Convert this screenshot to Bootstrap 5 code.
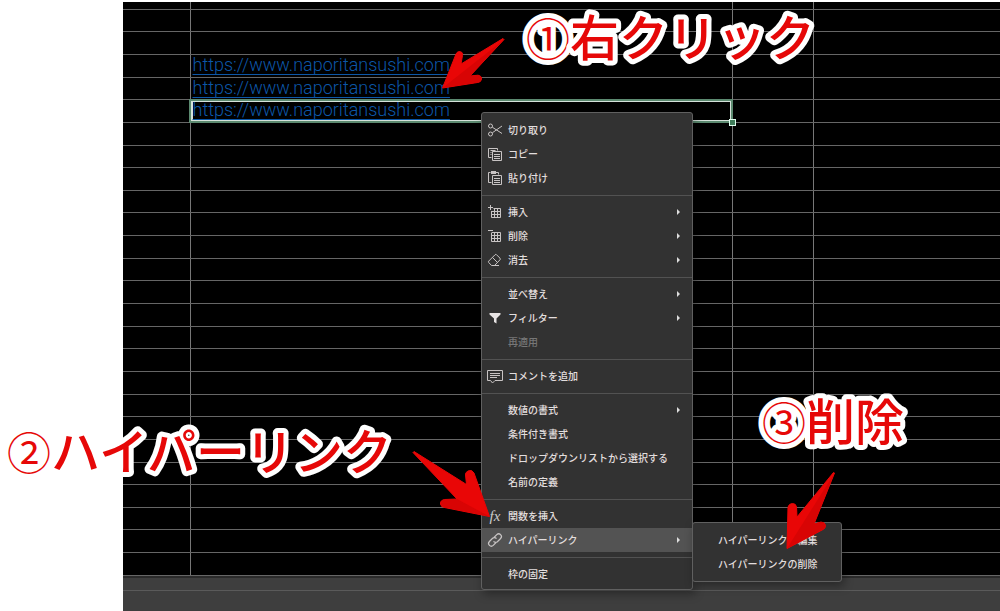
<!DOCTYPE html>
<html lang="ja">
<head>
<meta charset="utf-8">
<meta name="viewport" content="width=device-width, initial-scale=1">
<title>ハイパーリンクの削除</title>
<link href="https://cdn.jsdelivr.net/npm/bootstrap@5.3.0/dist/css/bootstrap.min.css" rel="stylesheet">
<style>
  body { font-family: "Noto Sans CJK JP", sans-serif; background: #fff; }
  .workbook { margin-left: 123px; margin-top: 2px; background: #3e3e3e; min-height: calc(100vh - 2px); }
  .sheet { height: calc(100vh - 37px); table-layout: fixed; border-collapse: collapse; background: #000; }
  .sheet td { font-family: Roboto, "Noto Sans CJK JP", sans-serif; padding: 0 0 0 2px; border: 1px solid #666; border-left-color: #777; border-right-color: #777; line-height: 20px; font-size: 18px; height: 22px; vertical-align: top; }
  .sheet td:first-child { border-left: 0; }
  .sheet td:last-child { border-right: 0; }
  .sheet tr:first-child td { border-top: 0; height: 7px; }
  .sheet a { color: #0c57a8; font-weight: 300; text-decoration: underline; text-decoration-thickness: 1px; text-underline-offset: 3px; text-decoration-skip-ink: none; }
  .sheet td.active-cell { outline: 2px solid #5c8a70; outline-offset: -1px; box-shadow: inset 0 0 0 2px #d5e2da; position: relative; }
  .fill-handle { right: -4px; bottom: -4px; width: 7px; height: 7px; background: #3f7d5a; border: 1px solid #dfe; z-index: 1; }
  .status-line { height: 15px; border-top: 2px solid #2a2a2a; border-bottom: 1px solid #5a5a5a; }

  .context-menu { background: #323232; border: 1px solid #606060; border-radius: 3px; padding: 5px 0 3px; box-shadow: 2px 4px 10px rgba(0,0,0,.35); color: #e2dede; font-size: 10px; }
  .main-menu { left: 481px; top: 112px; width: 212px; }
  .sub-menu { left: 210px; top: -6px; width: 150px; padding: 5px 0; }
  .menu-row { height: 24px; width: 100%; border: 0; background: transparent; color: inherit; padding: 0 12px 0 4px; font-weight: 500; line-height: 24px; text-align: left; }
  .menu-row:disabled { color: #777; }
  .menu-row.current { background: #535353; }
  .sub-menu .menu-row { padding-left: 25px; }
  .menu-icon { width: 18px; height: 18px; margin-right: 4px; flex: none; fill: none; stroke: #c8c4c4; stroke-width: 1; }
  .fx-icon { width: 18px; margin-right: 4px; font: italic 15px "Liberation Serif", serif; text-align: center; color: #ccc; }
  .menu-caret { width: 0; height: 0; border: 3px solid transparent; border-left-color: #ddd; border-right: 0; }
  .menu-rule { height: 1px; margin: 5px 0 4px; background: #525252; }

  .note, .arrow { overflow: visible; pointer-events: none; z-index: 1100; }
  .note text { font-size: 49px; font-weight: 500; fill: #e60808; stroke: #fff; stroke-width: 10px; stroke-linejoin: round; paint-order: stroke; }
  .note .step { font-size: 44px; font-weight: 400; }
  .note-one { left: 526px; top: 10px; width: 300px; height: 60px; }
  .note-two { left: 7px; top: 424px; width: 400px; height: 60px; }
  .note-three { left: 762px; top: 394px; width: 150px; height: 60px; }
  .arrow { fill: #e90606; stroke: #e90606; stroke-linejoin: round; }
  .arrow .shade { fill: #d80404; stroke: none; }
  .arrow-one { left: 440px; top: 34px; width: 68px; height: 58px; }
  .arrow-two { left: 410px; top: 448px; width: 84px; height: 74px; }
  .arrow-three { left: 784px; top: 468px; width: 54px; height: 84px; }
</style>
</head>
<body class="position-relative">
<main class="workbook">
  <table class="sheet w-100">
    <colgroup><col style="width:67px"><col style="width:542px"><col style="width:81px"><col></colgroup>
    <tbody id="rows"></tbody>
  </table>
  <div class="status-line"></div>
</main>

<nav class="context-menu main-menu position-absolute" aria-label="コンテキストメニュー">
  <button class="menu-row d-flex align-items-center"><svg class="menu-icon" viewBox="0 0 18 18"><circle cx="4.500" cy="5" r="2"/><circle cx="4.500" cy="13" r="2"/><path d="M6.300 6.200 16 12.500M6.300 11.800 16 5"/></svg>切り取り</button>
  <button class="menu-row d-flex align-items-center"><svg class="menu-icon" viewBox="0 0 18 18"><path d="M5.500 12.500h-3v-9h9v2M4.500 5.500h5M4.500 7.500h1M4.500 9.500h1M6.500 6.500h9v9h-9zM8 9.500h6M8 11.500h6M8 13.500h6"/></svg>コピー</button>
  <button class="menu-row d-flex align-items-center"><svg class="menu-icon" viewBox="0 0 18 18"><path d="M5.500 13.500h-3v-10h2M10 3.500h2.500v2M6.500 6.500h9v9h-9zM8 9.500h6M8 11.500h6M8 13.500h6"/><path d="M5 3.500h5" stroke-width="3"/></svg>貼り付け</button>
  <div class="menu-rule"></div>
  <button class="menu-row d-flex align-items-center"><svg class="menu-icon" viewBox="0 0 18 18"><path d="M2 4.500h5M4.500 2v5M5.500 8v6.500h9v-9h-7M8.500 5.500v9M11.500 5.500v9M5.500 8.500h9M5.500 11.500h9"/></svg>挿入<span class="menu-caret ms-auto"></span></button>
  <button class="menu-row d-flex align-items-center"><svg class="menu-icon" viewBox="0 0 18 18"><path d="M2 3.500h5M5.500 6v8.500h9v-9h-9M8.500 5.500v9M11.500 5.500v9M5.500 8.500h9M5.500 11.500h9"/></svg>削除<span class="menu-caret ms-auto"></span></button>
  <button class="menu-row d-flex align-items-center"><svg class="menu-icon" viewBox="0 0 18 18"><path d="M2.800 10 9 3.800q.8-.8 1.600 0L14 7.200q.8.800 0 1.600L8.500 14.500H5.500L2.800 11.600q-.8-.8 0-1.600zM6.500 6.500 11.500 11.500M8 14.500h5"/></svg>消去<span class="menu-caret ms-auto"></span></button>
  <div class="menu-rule"></div>
  <button class="menu-row d-flex align-items-center"><span class="menu-icon"></span>並べ替え<span class="menu-caret ms-auto"></span></button>
  <button class="menu-row d-flex align-items-center"><svg class="menu-icon" viewBox="0 0 18 18"><path fill="#e8e4e4" stroke="none" d="M3.500 4h11v1.500L10.500 9.500v5l-2.500-1.500V9.500L3.500 5.500z"/></svg>フィルター<span class="menu-caret ms-auto"></span></button>
  <button class="menu-row d-flex align-items-center" disabled><span class="menu-icon"></span>再適用</button>
  <div class="menu-rule"></div>
  <button class="menu-row d-flex align-items-center"><svg class="menu-icon" viewBox="0 0 18 18"><path d="M1.500 3.500h15v10H9l-2.500 2.500L4.500 13.500h-3zM4 6.500h10M4 8.500h10M4 10.500h7"/></svg>コメントを追加</button>
  <div class="menu-rule"></div>
  <button class="menu-row d-flex align-items-center"><span class="menu-icon"></span>数値の書式<span class="menu-caret ms-auto"></span></button>
  <button class="menu-row d-flex align-items-center"><span class="menu-icon"></span>条件付き書式</button>
  <button class="menu-row d-flex align-items-center"><span class="menu-icon"></span>ドロップダウンリストから選択する</button>
  <button class="menu-row d-flex align-items-center"><span class="menu-icon"></span>名前の定義</button>
  <div class="menu-rule"></div>
  <button class="menu-row d-flex align-items-center"><span class="fx-icon">fx</span>関数を挿入</button>
  <div class="position-relative">
    <button class="menu-row current d-flex align-items-center"><svg class="menu-icon" viewBox="0 0 18 18"><g transform="rotate(-45 9 9)"><path stroke-width="1.200" d="M8 11.500H4a2.700 2.700 0 0 1 0-5.400h4.500a2.700 2.700 0 0 1 2.500 3M10 6.500h4a2.700 2.700 0 0 1 0 5.400H9.500a2.700 2.700 0 0 1-2.500-3"/></g></svg>ハイパーリンク<span class="menu-caret ms-auto"></span></button>
    <div class="context-menu sub-menu position-absolute">
      <button class="menu-row d-block">ハイパーリンクの編集</button>
      <button class="menu-row d-block">ハイパーリンクの削除</button>
    </div>
  </div>
  <div class="menu-rule"></div>
  <button class="menu-row d-flex align-items-center"><span class="menu-icon"></span>枠の固定</button>
</nav>

<svg class="note note-one position-absolute"><text x="0" y="46"><tspan class="step">①</tspan>右クリック</text></svg>
<svg class="note note-two position-absolute"><text x="0" y="46"><tspan class="step">②</tspan>ハイパーリンク</text></svg>
<svg class="note note-three position-absolute"><text x="0" y="46"><tspan class="step">③</tspan>削除</text></svg>

<svg class="arrow arrow-one position-absolute" viewBox="440 34 68 58"><path d="M442.500 88 456 54q2-4 6-1.500 1 1 .5 3L461 64 503 38.500l1 1L470 76l8-.8q4 .8 3.500 4-.5 3-4 3.300z"/><path class="shade" d="M442.500 88 504 39.500 470 76l8-.8q4 .8 3.500 4-.5 3-4 3.300z"/></svg>
<svg class="arrow arrow-two position-absolute" viewBox="410 448 84 74"><path d="M489.500 516.500 474 473q-2-4-6-2-3 1.500-2.500 4l1 9.500L414 451.500l-1 1L457 499l-12.500.5q-4.500 1-4 4.500.5 3 4 3.500z"/><path class="shade" d="M489.500 516.500 457 499l-12.500.5q-4.500 1-4 4.500.5 3 4 3.500z"/></svg>
<svg class="arrow arrow-three position-absolute" viewBox="784 468 54 84"><path d="M787 548.500 788 507q1-3.500 4.500-3.500t4 3.500l.5 10L833.500 472.500l1 .5L814 524l7-2q4 0 4.500 3.500 0 3-2.500 4z"/><path class="shade" d="M787 548.500 834.500 473 814 524l7-2q4 0 4.500 3.500 0 3-2.500 4z"/></svg>

<script>
  const url = "https://www.naporitansushi.com";
  const linkRows = [3, 4, 5];
  const activeRow = 5;
  let html = "";
  for (let r = 0; r <= 25; r++) {
    const link = linkRows.includes(r) ? `<a href="${url}">${url}</a>` : "";
    const handle = r === activeRow ? '<span class="fill-handle position-absolute"></span>' : "";
    html += `<tr><td></td><td${r === activeRow ? ' class="active-cell"' : ""}>${link}${handle}</td><td></td><td></td></tr>`;
  }
  document.getElementById("rows").innerHTML = html;
</script>
<script src="https://cdn.jsdelivr.net/npm/bootstrap@5.3.0/dist/js/bootstrap.bundle.min.js"></script>
</body>
</html>
